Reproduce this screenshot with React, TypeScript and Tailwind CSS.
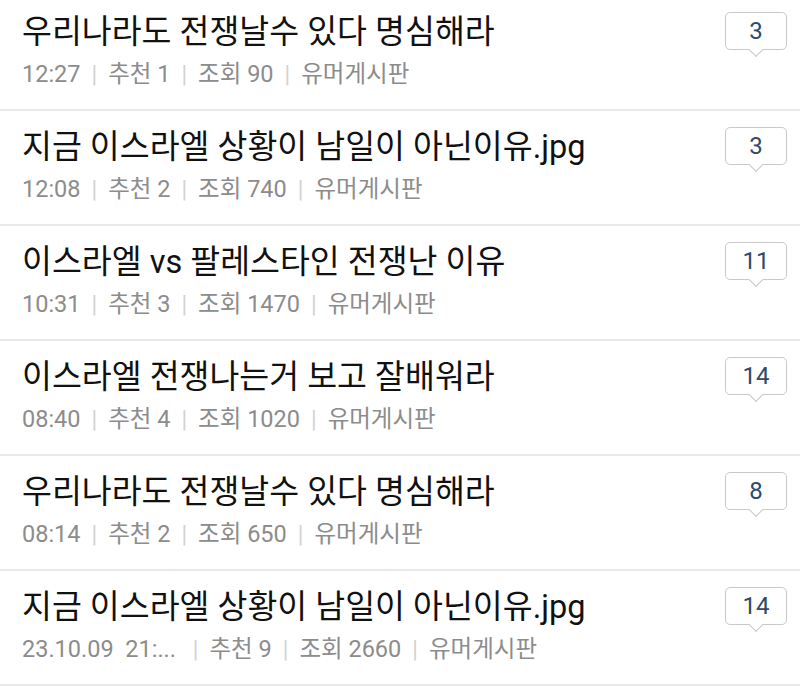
const POSTS = [
  { title: "우리나라도 전쟁날수 있다 명심해라", time: "12:27", rec: 1, views: 90, comments: 3 },
  { title: "지금 이스라엘 상황이 남일이 아닌이유.jpg", time: "12:08", rec: 2, views: 740, comments: 3 },
  { title: "이스라엘 vs 팔레스타인 전쟁난 이유", time: "10:31", rec: 3, views: 1470, comments: 11 },
  { title: "이스라엘 전쟁나는거 보고 잘배워라", time: "08:40", rec: 4, views: 1020, comments: 14 },
  { title: "우리나라도 전쟁날수 있다 명심해라", time: "08:14", rec: 2, views: 650, comments: 8 },
  { title: "지금 이스라엘 상황이 남일이 아닌이유.jpg", time: "23.10.09  21:... ", rec: 9, views: 2660, comments: 14 },
];

function Pipe() {
  return <span className="mx-[11px] text-[#d2d2d2] text-[23px]">|</span>;
}

function CommentBadge({ count }: { count: number }) {
  return (
    <div className="relative w-[62px] h-[38px] rounded-[5px] border border-[#c9c9c9] bg-white flex items-center justify-center">
      <span className="text-[24px] text-[#2f4a6a] leading-none">{count}</span>
      <span className="absolute left-1/2 -bottom-[6px] -ml-[5px] w-[10px] h-[10px] rotate-45 bg-white border-r border-b border-[#c9c9c9]" />
    </div>
  );
}

export default function App() {
  return (
    <div
      className="w-[800px] h-[689px] overflow-hidden bg-white"
      style={{ fontFamily: 'Roboto, "Noto Sans CJK KR", sans-serif' }}
    >
      <ul className="-mt-[4px]">
        {POSTS.map((p, i) => (
          <li
            key={i}
            className="h-[115px] border-b-2 border-[#e9e9e9] flex items-start justify-between pl-[22px] pr-[13px] pt-[16px]"
          >
            <div className="flex flex-col gap-[7px]">
              <div className="text-[32.5px] text-[#111] leading-[40px]">{p.title}</div>
              <div className="text-[23.5px] text-[#8c8c8c] leading-[30px] whitespace-pre">
                {p.time}
                <Pipe />
                추천 {p.rec}
                <Pipe />
                조회 {p.views}
                <Pipe />
                유머게시판
              </div>
            </div>
            <CommentBadge count={p.comments} />
          </li>
        ))}
      </ul>
    </div>
  );
}
